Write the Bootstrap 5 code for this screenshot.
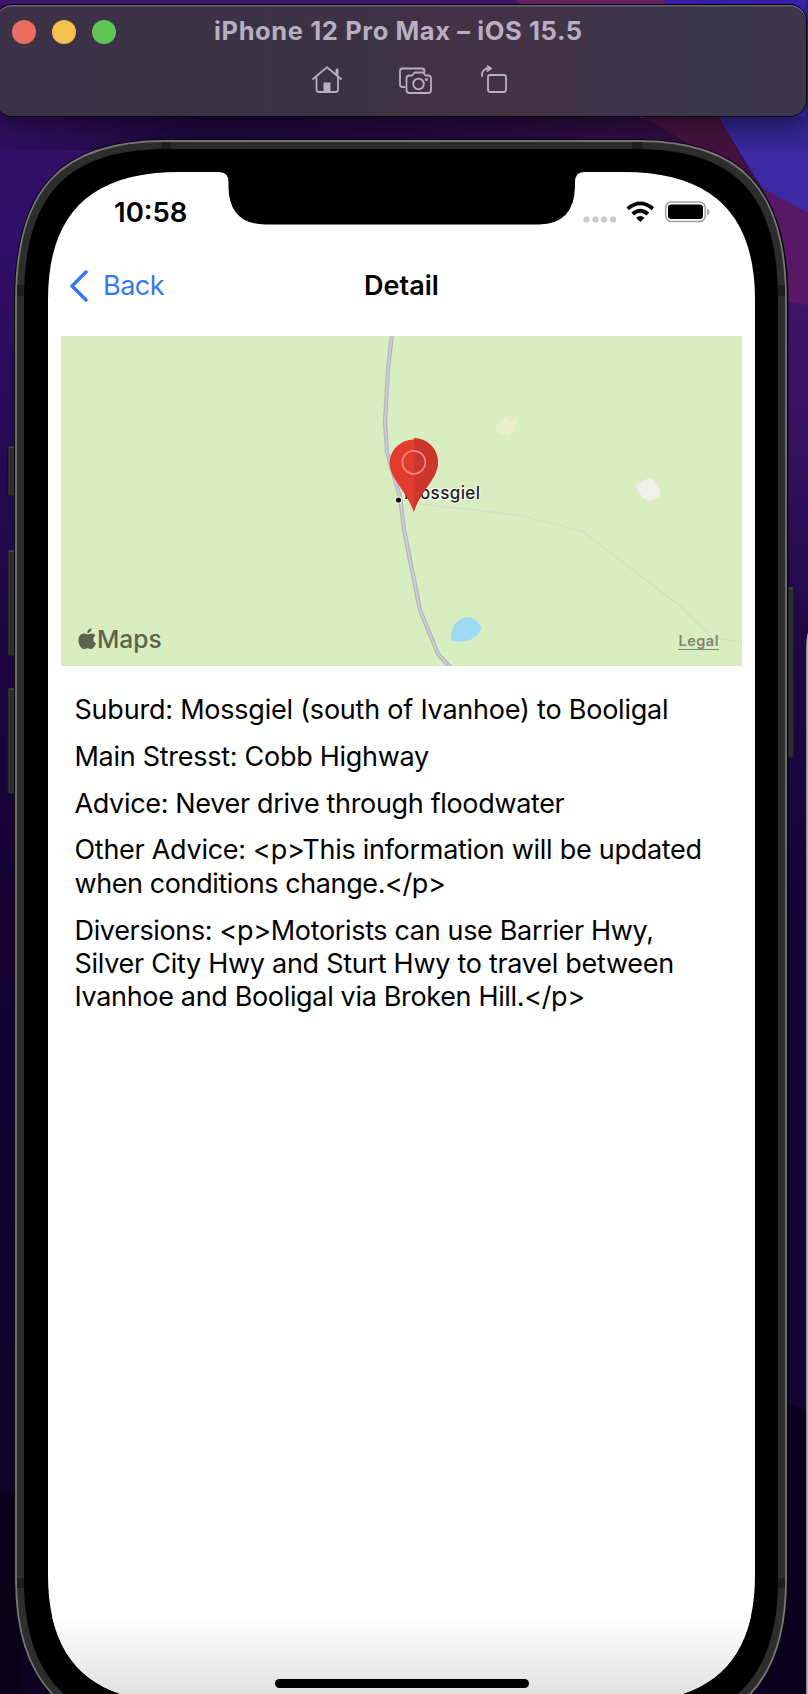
<!DOCTYPE html>
<html lang="en">
<head>
<meta charset="utf-8">
<meta name="viewport" content="width=device-width, initial-scale=1">
<title>iPhone 12 Pro Max – iOS 15.5</title>
<link href="https://cdn.jsdelivr.net/npm/bootstrap@5.3.0/dist/css/bootstrap.min.css" rel="stylesheet">
<style>
body{font-family:Inter,"Liberation Sans",sans-serif;color:#000;width:808px;height:1694px;overflow:hidden;background:#130329}
.desktop{height:1694px;overflow:hidden}
.scenery{inset:0;z-index:0}
.stack-layer{z-index:1}
.titlebar{height:113px;width:812px;margin:4px 0 0 -5px;border-radius:17px;background:linear-gradient(90deg,#3b3247 0%,#3d3245 45%,#433246 62%,#403448 72%,#3a364d 88%,#3b3549);border:1px solid #08030f;box-shadow:inset 0 1.5px 0 #6c6475,0 8px 22px rgba(0,0,0,.35);padding:15px 0 0 16px}
.dots{gap:16px;width:202px}
.light{width:24px;height:24px;border-radius:50%}
.light-close{background:#ed6a5e}
.light-min{background:#f5bf4f}
.light-zoom{background:#61c554}
.wtitle{font-size:25.5px;font-weight:700;line-height:22px;margin-top:-2px;letter-spacing:.6px;color:#b9adc4;white-space:nowrap}
.tools{height:34px;margin-top:18px}
.screen{margin:55px 0 0 48px;width:707px;height:1522px}
.status{height:72px;padding:23px 45px 0 66px}
.clock{font-size:27.5px;font-weight:600;line-height:34px}
.radios{margin-top:4px}
.navrow{height:92px;padding:14px 22px 0 21px}
.back{color:#3478f6;font-size:27px;line-height:56px;height:56px;letter-spacing:-.5px}
.back svg{margin-right:15px}
.heading{font-size:27px;font-weight:600;line-height:56px}
.map{margin:0 13px;width:681px;height:330px}
.pin{left:327px;top:101px}
.maplogo{left:17px;bottom:9px;color:#59634e;font-size:24.5px;font-weight:500;line-height:36px}
.legal{right:23px;bottom:14px;font-size:14.5px;font-weight:600;line-height:22px;color:#7d8871;text-decoration:underline;text-underline-offset:3px;letter-spacing:.5px}
.legal:hover{color:#7d8871}
.town{left:343px;top:145px;font-size:17px;font-weight:500;line-height:24px;color:#1c1c20;letter-spacing:.4px;text-shadow:0 0 2px #fff,0 0 2px #fff,1px 1px 1px #fff,-1px -1px 1px #fff}
.facts{padding:27px 20px 0 26.5px;font-size:27px;line-height:33.4px}
.facts p{margin:0 0 13.4px}
.facts span{white-space:nowrap}
.t1{letter-spacing:-.22px}.t2{letter-spacing:-.28px}.t3{letter-spacing:-.34px}.t4{letter-spacing:-.41px}
.homebar{left:227px;top:1507px;width:254px;height:9px;border-radius:5px;background:#000}
</style>
</head>
<body>
<div class="desktop position-relative">
<svg class="scenery position-absolute" width="808" height="1694" viewBox="0 0 808 1694">
<defs>
<linearGradient id="left" x1="0" y1="0" x2="0" y2="1"><stop offset="0" stop-color="#451575"/><stop offset=".03" stop-color="#321064"/><stop offset=".14" stop-color="#320f68"/><stop offset=".3" stop-color="#23094e"/><stop offset=".45" stop-color="#180438"/><stop offset=".6" stop-color="#150332"/><stop offset="1" stop-color="#0d0223"/></linearGradient>
<linearGradient id="under" x1="0" x2="1" y1="0" y2="0"><stop offset="0" stop-color="#2f0f60"/><stop offset=".25" stop-color="#1c0838"/><stop offset=".55" stop-color="#240a3a"/><stop offset="1" stop-color="#380f43"/></linearGradient>
<linearGradient id="blue" gradientUnits="userSpaceOnUse" x1="0" y1="115" x2="0" y2="165"><stop offset="0" stop-color="#2d2382"/><stop offset="1" stop-color="#3e29a5"/></linearGradient>
<linearGradient id="right" x1="0" y1="0" x2="0" y2="1"><stop offset="0" stop-color="#3f1468"/><stop offset=".25" stop-color="#34105e"/><stop offset=".5" stop-color="#200846"/><stop offset="1" stop-color="#130334"/></linearGradient>
<linearGradient id="fade" x1="0" y1="0" x2="0" y2="1"><stop offset="0" stop-color="#fff"/><stop offset="1" stop-color="#dedede"/></linearGradient>
<clipPath id="glass"><path d="M48 300C48 216 88 172 180 172H623C714 172 755 216 755 300V1575C755 1660 712 1702 625 1702H178C91 1702 48 1660 48 1575Z"/></clipPath>
</defs>
<rect width="808" height="1694" fill="url(#left)"/>
<path d="M0 0H808V150H0Z" fill="url(#under)"/>
<rect width="808" height="5" fill="#41166f"/>
<path d="M515 0H665L720 118H640Z" fill="#6b2264"/>
<path d="M640 115H720L746 168L765 188V300H700V150Z" fill="#42123d"/>
<path d="M664 0H808V214L764 190Q744 160 719 117Z" fill="#3a22b4"/>
<path d="M719 117H806V0H808V214L764 190Q744 160 719 117Z" fill="url(#blue)"/>
<path d="M764 189L808 213V310L764 298Z" fill="#591866"/>
<path d="M764 298L808 305V960H764Z" fill="url(#right)"/>
<path d="M764 930L808 940V1420H764Z" fill="#150332"/>
<path d="M764 1390L808 1412V1694H764Z" fill="#0b0220"/>
<path d="M0 1010Q10 1008 20 1014V1100H0Z" fill="#130330"/>
<path d="M0 1491L20 1495V1694H0Z" fill="#090219"/>
<path d="M808 632Q806.200 638 806.200 650V1694H808Z" fill="#b5b3b6"/>
<g fill="#2d2d2e" stroke="#151318"><rect x="7.500" y="446" width="10" height="50" rx="2"/><rect x="7.500" y="550" width="10" height="106" rx="2"/><rect x="7.500" y="688" width="10" height="106" rx="2"/><rect x="784" y="587" width="10" height="171" rx="2"/></g>
<path d="M9 447H16M9 551H16M9 689H16M786 588H793" stroke="#5a5a5b"/>
<path d="M15.500 300C15.500 190 60 140.500 165 140.500H638C742 140.500 787 190 787 300V1580C787 1685 735 1734 635 1734H168C68 1734 15.500 1685 15.500 1580Z" fill="#2d2d2d" stroke="#0a0710" stroke-width="3"/>
<path d="M16 300C16 190 60 141 165 141H638C742 141 786 190 786 300V1580C786 1685 735 1734 635 1734H168C68 1734 16 1685 16 1580Z" fill="#2d2d2d" stroke="#777677" stroke-width="1.800"/>
<path d="M161 142H171V149H161ZM632 142H643V149H632ZM17 285H24V296H17ZM778 285H785V296H778ZM17 1578H24V1588H17ZM778 1578H785V1588H778Z" fill="#1e1e1e"/>
<path d="M24 300C24 195 66 149 168 149H635C736 149 778 195 778 300V1580C778 1680 730 1726 630 1726H170C72 1726 24 1680 24 1580Z"/>
<g clip-path="url(#glass)"><rect x="48" y="172" width="707" height="1530" fill="#fff"/><rect x="48" y="1616" width="707" height="86" fill="url(#fade)"/></g>
<path d="M215 170V172H219Q228.500 172 228.500 182V187Q229 224 265 224.500H539Q574 224 575 187V182Q575 172 584 172H590V170Z"/>
</svg>

<header class="titlebar position-relative stack-layer">
<div class="d-flex align-items-center">
<div class="dots d-flex"><span class="light light-close"></span><span class="light light-min"></span><span class="light light-zoom"></span></div>
<div class="wtitle">iPhone 12 Pro Max – iOS 15.5</div>
</div>
<svg class="tools d-block" width="790" height="34" viewBox="12 62 790 34" fill="none" stroke="#b9adc4" stroke-width="1.800" stroke-linejoin="round" stroke-linecap="round">
<path d="M313 79L327 67.300L341 79M316.500 77V89.500Q316.500 92 319 92H335.500Q338 92 338 89.500V77"/><path d="M323.500 82.500H330.500V92H323.500Z" fill="#b9adc4" stroke="none"/><path d="M337 70V74" stroke-width="3"/>
<path d="M404.500 87H402.500Q400 87 400 84.500V71Q400 68.500 402.500 68.500H422Q424.500 68.500 424.500 71V72"/><path d="M406.500 78.500Q406.500 75.500 409.500 75.500H412L414.500 72.500H423L425.500 75.500H428Q431 75.500 431 78.500V90Q431 93 428 93H409.500Q406.500 93 406.500 90Z"/><circle cx="418.500" cy="84" r="5.300"/><circle cx="426.500" cy="79.500" r=".7"/>
<rect x="488" y="75" width="18" height="17" rx="2.200"/><path d="M482 76C481.500 71 484.500 68.500 488 68.500"/><path d="M487.500 65.500L492 68.500L487.500 71.500Z" fill="#b9adc4" stroke-width="1"/>
</svg>
</header>

<main class="screen position-relative stack-layer">
<div class="status d-flex justify-content-between align-items-start">
<div class="clock">10:58</div>
<svg class="radios" width="128" height="26" viewBox="582 199 128 26"><g fill="#ccc"><rect x="583.500" y="216.500" width="6" height="6" rx="2.300"/><rect x="592.500" y="216.500" width="6" height="6" rx="2.300"/><rect x="601" y="216.500" width="6" height="6" rx="2.300"/><rect x="610" y="216.500" width="6" height="6" rx="2.300"/></g>
<g fill="none" stroke="#000" stroke-width="3.800"><path d="M627.700 208.800Q640.300 198 652.900 208.800"/><path d="M632.700 214Q640.300 207.500 647.900 214"/></g><path d="M636 217.700Q640.300 214.300 644.600 217.700L640.300 222Z"/>
<rect x="665.700" y="202" width="39.500" height="19.500" rx="5.500" fill="none" stroke="#a3a3a3" stroke-width="1.600"/><rect x="668" y="204.500" width="35" height="14.500" rx="3.200"/><path d="M707 208.500Q709.500 209.500 709.500 212Q709.500 214.500 707 215.500Z" fill="#a3a3a3"/></svg>
</div>
<nav class="navrow d-flex align-items-start position-relative">
<a class="back d-flex align-items-center text-decoration-none" href="#"><svg width="19" height="32" viewBox="0 0 19 32" fill="none" stroke="#3478f6" stroke-width="3.500" stroke-linecap="round" stroke-linejoin="round"><path d="M17 2L3 16L17 30"/></svg><span>Back</span></a>
<div class="heading position-absolute start-50 translate-middle-x">Detail</div>
</nav>
<section class="map position-relative overflow-hidden">
<svg class="d-block" width="681" height="330" viewBox="61 336 681 330">
<rect x="61" y="336" width="681" height="330" fill="#d8edc0"/>
<path d="M421 504L518 515L582 531L680 606L712 638L742 642" fill="none" stroke="#d0dfc6" stroke-width="1.200"/>
<g fill="none" stroke-linejoin="round"><path d="M392 334L388 370L385 422L387 452L400 497L404 530L420 610L438 654L450 667" stroke="#b1b5ba" stroke-width="4.200"/><path d="M392 334L388 370L385 422L387 452L400 497L404 530L420 610L438 654L450 667" stroke="#c9ced8" stroke-width="2"/></g>
<path d="M496 425L506 417L511 421L517 419L518 422L515 426V430L508 436L497 433Z" fill="#e9efcd"/>
<path d="M635 486L644 480Q650 478 654 480L660 490V496L650 501L643 498Z" fill="#f2f0ed"/>
<path d="M452 641Q449 635 455 624Q463 615 472 618Q481 623 481 629Q480 635 470 640Q463 643 452 641Z" fill="#9fdaf4"/>
<circle cx="398.500" cy="500" r="3.600" fill="#fff"/><circle cx="398.500" cy="500" r="2.600" fill="#111"/>
</svg>
<div class="town position-absolute">Mossgiel</div>
<svg class="pin position-absolute" width="52" height="78" viewBox="388 437 52 78"><path d="M413.800 512C407 491 389.500 479 389.500 462A24.300 24 0 0 1 438 462C438 479 420 491 413.800 512Z" fill="#e43b2f"/><path d="M413.800 438A24 24 0 0 1 438 462C438 479 420 491 413.800 512Z" fill="#cd362d"/><circle cx="413.800" cy="462.300" r="11.500" fill="none" stroke="#ee8b86" stroke-width="1.700"/></svg>
<div class="maplogo position-absolute d-flex align-items-center"><svg width="19" height="22" viewBox="0 0 19 22" fill="#59634e"><path d="M9.500 6.300C11 6.300 12 5.400 13.700 5.400C15.300 5.400 16.800 6.300 17.500 7.500C14.300 9.500 14.800 14 18 15.300C17 18 15.200 21 13.200 21C11.700 21 11.300 20.200 9.500 20.200C7.700 20.200 7.200 21 5.700 21C3.100 21 .5 16.500 .5 12.300C.5 8 3.200 5.500 6 5.500C7.500 5.500 8.600 6.300 9.500 6.300Z"/><path d="M9.300 5C9.100 2.500 11.200 .5 13.400 .2C13.700 2.800 11.500 5 9.300 5Z"/></svg><span>Maps</span></div>
<a class="legal position-absolute" href="#">Legal</a>
</section>
<section class="facts">
<p><span class="t1">Suburd: Mossgiel (south of Ivanhoe) to Booligal</span></p>
<p><span class="t2">Main Stresst: Cobb Highway</span></p>
<p><span class="t3">Advice: Never drive through floodwater</span></p>
<p><span class="t2">Other Advice: &lt;p&gt;This information will be updated</span><br><span class="t4">when conditions change.&lt;/p&gt;</span></p>
<p><span class="t3">Diversions: &lt;p&gt;Motorists can use Barrier Hwy,</span><br><span class="t2">Silver City Hwy and Sturt Hwy to travel between</span><br><span class="t3">Ivanhoe and Booligal via Broken Hill.&lt;/p&gt;</span></p>
</section>
<div class="homebar position-absolute"></div>
</main>
</div>
<script src="https://cdn.jsdelivr.net/npm/bootstrap@5.3.0/dist/js/bootstrap.bundle.min.js"></script>
</body>
</html>
